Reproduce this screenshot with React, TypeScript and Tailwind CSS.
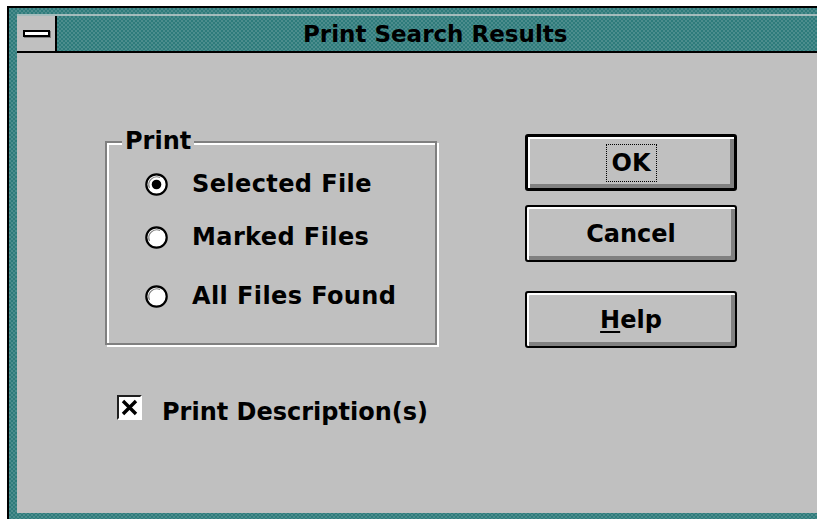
import React from "react";

const font = "font-['DejaVu_Sans',_'Liberation_Sans',_sans-serif] font-bold";

// Dithered teal used by the window frame and the title bar
const teal =
  "bg-[conic-gradient(#2e7b7b_25%,#4c8d8d_0_50%,#2e7b7b_0_75%,#4c8d8d_0)] bg-[length:4px_4px]";

function Radio({ checked }: { checked?: boolean }) {
  return (
    <svg width="23" height="23" viewBox="0 0 23 23" className="shrink-0">
      <circle cx="11.5" cy="11.5" r="10.2" fill="#fff" stroke="#000" strokeWidth="2.2" />
      <path d="M4.5 15 A8 8 0 0 1 15 4.5" fill="none" stroke="#808080" strokeWidth="1.2" />
      {checked && <circle cx="11.5" cy="11.5" r="4.8" fill="#000" />}
    </svg>
  );
}

function RadioRow({ label, checked, className }: { label: string; checked?: boolean; className?: string }) {
  return (
    <div className={`flex items-center h-[28px] ${className ?? ""}`}>
      <Radio checked={checked} />
      <span className="ml-[24px] text-[24px] leading-[28px] tracking-[0.4px] text-black">{label}</span>
    </div>
  );
}

function Button({
  children,
  isDefault,
  className,
}: {
  children: React.ReactNode;
  isDefault?: boolean;
  className?: string;
}) {
  return (
    <div
      className={`w-[212px] h-[57px] rounded-[3px] border-black bg-[#c0c0c0] flex items-center justify-center ${
        isDefault ? "border-[3px]" : "border-2"
      } shadow-[inset_2px_2px_0_#fff,inset_-4px_-4px_0_#808080] ${className ?? ""}`}
    >
      {children}
    </div>
  );
}

export default function App() {
  return (
    <div className={`w-[817px] h-[519px] overflow-hidden bg-white pl-[7px] pt-[6px] ${font}`}>
      <div className={`w-[810px] h-[513px] border-l-2 border-t-2 border-black pl-[8px] pt-[6px] pb-[6px] flex flex-col ${teal}`}>
        {/* title row */}
        <div className="flex h-[39px] shrink-0 border-t-2 border-[#a4bcbc] border-b-2 border-b-black">
          <div className="w-[40px] h-full shrink-0 bg-[#c0c0c0] border-r-2 border-black flex items-center pl-[6px]">
            <div className="w-[27px] h-[7px] border-2 border-black bg-white shadow-[1px_1px_0_#808080]" />
          </div>
          <div className={`flex-1 h-full flex items-center ${teal}`}>
            <span className="ml-[246px] text-[23px] leading-[28px] text-black">Print Search Results</span>
          </div>
        </div>

        {/* client area */}
        <div className="flex-1 bg-[#c0c0c0] flex items-start pl-[88px]">
          <div className="pt-[88px] w-[332px] shrink-0">
            <div className="relative h-[204px] border-2 border-[#808080] shadow-[inset_2px_2px_0_#fff,2px_2px_0_#fff] pt-[27px] pl-[38px]">
              <span className="absolute left-[15px] top-[-16px] px-[3px] bg-[#c0c0c0] text-[24px] leading-[28px] text-black">
                Print
              </span>
              <RadioRow label="Selected File" checked />
              <RadioRow label="Marked Files" className="mt-[25px]" />
              <RadioRow label="All Files Found" className="mt-[31px]" />
            </div>

            <div className="flex items-start mt-[50px] ml-[12px]">
              <div className="w-[25px] h-[25px] border-t-2 border-l-2 border-[#202020] border-b-2 border-r-2 border-b-white border-r-white bg-white flex items-center justify-center">
                <svg width="17" height="17" viewBox="0 0 17 17">
                  <path d="M2 2 L15 15 M15 2 L2 15" stroke="#000" strokeWidth="3.4" />
                </svg>
              </div>
              <span className="ml-[20px] mt-[3px] text-[24px] leading-[28px] text-black">Print Description(s)</span>
            </div>
          </div>

          <div className="ml-[88px] pt-[81px] flex flex-col shrink-0">
            <Button isDefault>
              <span className="px-[5px] py-[4px] border border-dotted border-black text-[24px] leading-[28px] text-black">
                OK
              </span>
            </Button>
            <Button className="mt-[14px]">
              <span className="text-[24px] leading-[28px] text-black">Cancel</span>
            </Button>
            <Button className="mt-[29px]">
              <span className="text-[24px] leading-[28px] text-black">
                <span className="underline decoration-2 underline-offset-[3px]">H</span>elp
              </span>
            </Button>
          </div>
        </div>
      </div>
    </div>
  );
}
